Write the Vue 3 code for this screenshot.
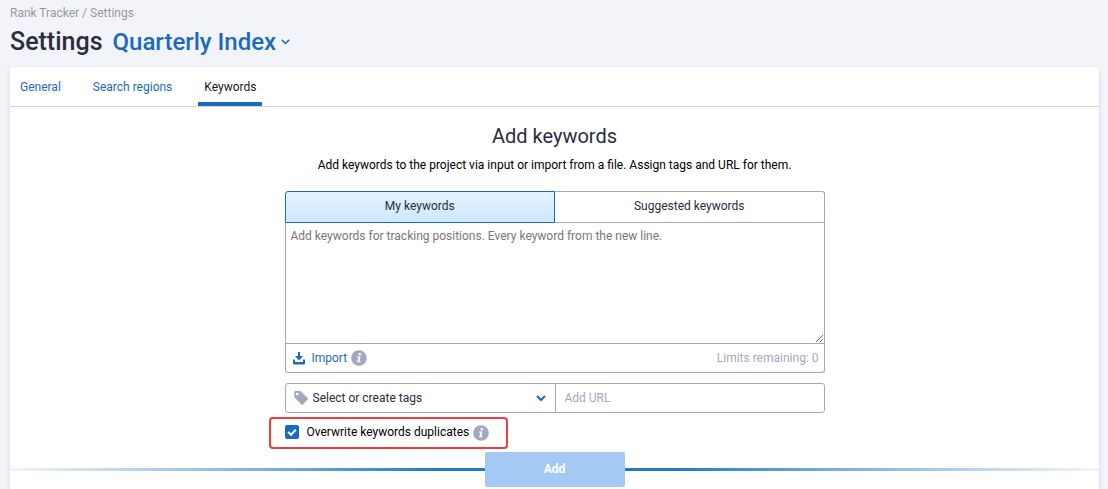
<script setup>
import { ref } from 'vue'

const sections = ['General', 'Search regions', 'Keywords']
const activeSection = ref('Keywords')
const sources = ['My keywords', 'Suggested keywords']
const activeSource = ref('My keywords')
const keywords = ref('')
const tag = ref('')
const url = ref('')
const overwrite = ref(true)
</script>

<template>
  <div class="page">
    <header class="header">
      <nav class="crumbs" aria-label="Breadcrumb">
        <a href="#">Rank Tracker</a> / <a href="#">Settings</a>
      </nav>
      <div class="heading">
        <h1>Settings</h1>
        <button type="button" class="project">
          Quarterly Index
          <svg width="9" height="6" viewBox="0 0 9 6" aria-hidden="true">
            <path d="M0.700 0.800l3.800 3.700L8.300 0.800" fill="none" stroke="currentColor" stroke-width="1.600" />
          </svg>
        </button>
      </div>
    </header>

    <main class="panel">
      <nav class="tabs" aria-label="Settings sections">
        <a
          v-for="section in sections"
          :key="section"
          href="#"
          :class="{ active: section === activeSection }"
          @click.prevent="activeSection = section"
        >{{ section }}</a>
      </nav>

      <form class="content" @submit.prevent>
        <h2>Add keywords</h2>
        <p class="lead">Add keywords to the project via input or import from a file. Assign tags and URL for them.</p>

        <div class="fields">
          <div class="sources">
            <button
              v-for="source in sources"
              :key="source"
              type="button"
              :class="{ active: source === activeSource }"
              @click="activeSource = source"
            >{{ source }}</button>
          </div>
          <textarea
            v-model="keywords"
            aria-label="Keywords"
            placeholder="Add keywords for tracking positions. Every keyword from the new line."
          ></textarea>
          <div class="tools">
            <button type="button" class="import">
              <svg width="12" height="13" viewBox="0 0 12 13" aria-hidden="true">
                <path d="M0 7.500h2v2.500h8V7.500h2v4a1 1 0 0 1-1 1H1a1 1 0 0 1-1-1z" fill="currentColor" />
                <path d="M5 0h2v4h3L6 8.500L2 4h3z" fill="currentColor" />
              </svg>
              Import
            </button>
            <svg class="info" width="16" height="16" viewBox="0 0 16 16" role="img" aria-label="Import help">
              <circle cx="8" cy="8" r="7.800" fill="#a2a8bf" />
              <circle cx="8.800" cy="4.200" r="1.300" fill="#fff" />
              <path d="M6 6.500h3.600l-1.200 4.700h1.200l-.3 1.100H5.700l.3-1.100h.5l.9-3.600H5.700z" fill="#fff" />
            </svg>
            <span class="limits">Limits remaining: 0</span>
          </div>

          <div class="extras">
            <div class="tag-field">
              <svg class="tag-icon" width="14" height="14" viewBox="0 0 14 14" aria-hidden="true">
                <path fill-rule="evenodd" d="M1 0h5.500L13.600 7a1 1 0 0 1 0 1.400L9 13.600a1 1 0 0 1-1.400 0L0.300 6.500V1Q.3 0 1 0zM3.200 1.700a1.300 1.300 0 1 0 0 2.600a1.300 1.300 0 1 0 0-2.600z" fill="#a2a8bf" />
              </svg>
              <select v-model="tag" aria-label="Tags">
                <option value="">Select or create tags</option>
              </select>
              <svg class="arrow" width="10" height="7" viewBox="0 0 10 7" aria-hidden="true">
                <path d="M1 1l4 4l4-4" fill="none" stroke="#1a6bbd" stroke-width="2" />
              </svg>
            </div>
            <input v-model="url" type="text" class="url" aria-label="URL" placeholder="Add URL" />
          </div>

          <div class="overwrite">
            <label>
              <input v-model="overwrite" type="checkbox" />
              <span>Overwrite keywords duplicates</span>
            </label>
            <svg class="info" width="16" height="16" viewBox="0 0 16 16" role="img" aria-label="Overwrite help">
              <circle cx="8" cy="8" r="7.800" fill="#a2a8bf" />
              <circle cx="8.800" cy="4.200" r="1.300" fill="#fff" />
              <path d="M6 6.500h3.600l-1.200 4.700h1.200l-.3 1.100H5.700l.3-1.100h.5l.9-3.600H5.700z" fill="#fff" />
            </svg>
          </div>
        </div>

        <div class="submit">
          <span class="line"></span>
          <button type="submit">Add</button>
          <span class="line right"></span>
        </div>
      </form>
    </main>
  </div>
</template>

<style>
body {
  background: #f3f4f9;
}
</style>

<style scoped>
.page,
.page *,
.page *::after {
  box-sizing: border-box;
}
.page {
  display: flex;
  flex-direction: column;
  min-height: 100vh;
  padding: 5px 9px 0 10px;
  font: 12px/16px Roboto, sans-serif;
  color: #2b2d3c;
}
button,
select,
input,
textarea {
  font: inherit;
  color: inherit;
  margin: 0;
}
button {
  cursor: pointer;
}
a {
  text-decoration: none;
}
.crumbs,
.crumbs a {
  color: #999;
}
.heading {
  display: flex;
  align-items: center;
  gap: 10px;
  height: 40px;
}
h1 {
  margin: 0;
  padding-top: 2px;
  font-size: 25px;
  line-height: 28px;
  font-weight: 500;
}
.project {
  display: flex;
  align-items: center;
  gap: 5px;
  padding: 2px 0 0;
  border: 0;
  background: none;
  font-size: 24px;
  line-height: 28px;
  font-weight: 500;
  color: #1a6bbd;
}
.header {
  padding-bottom: 6px;
}
.panel {
  flex: 1 0 auto;
  background: #fff;
  border-radius: 3px 3px 0 0;
  box-shadow: 0 2px 5px #cdd8ec;
}
.tabs {
  display: flex;
  gap: 20px;
  padding: 0 4px;
  border-bottom: 1px solid #c6d3e5;
}
.tabs a {
  padding: 12px 6px 7px;
  border-bottom: 4px solid transparent;
  color: #1a6bbd;
}
.tabs .active {
  border-color: #1a6bbd;
  color: #17181f;
}
h2 {
  margin: 0;
  padding-top: 17px;
  font-size: 20px;
  line-height: 24px;
  font-weight: 400;
  text-align: center;
}
.lead {
  margin: 9px 0 18px;
  text-align: center;
  color: #000;
}
.fields {
  width: 540px;
  max-width: 100%;
  margin: 0 auto;
}
.sources {
  display: flex;
}
.sources button {
  flex: 1;
  height: 32px;
  padding: 0 0 2px;
  border: 1px solid #a2a8bf;
  border-left: 0;
  border-radius: 0 3px 0 0;
  background: #fff;
}
.sources .active {
  border: 1px solid #1a6bbd;
  border-radius: 3px 0 0 0;
  background: linear-gradient(#e5f3ff, #cde8ff);
}
textarea {
  display: block;
  width: 100%;
  height: 121px;
  padding: 5px;
  border: 1px solid #a2a8bf;
  border-width: 0 1px 1px;
  outline: 0;
  resize: vertical;
}
textarea::placeholder {
  color: #777;
}
.tools {
  display: flex;
  align-items: center;
  gap: 4px;
  height: 29px;
  padding: 0 5px 0 7px;
  border: 1px solid #a2a8bf;
  border-top: 0;
  border-radius: 0 0 3px 3px;
}
.import {
  display: flex;
  align-items: center;
  gap: 7px;
  padding: 0;
  border: 0;
  background: none;
  color: #1a6bbd;
}
.limits {
  margin-left: auto;
  color: #a2a8bf;
}
.extras {
  display: grid;
  grid-template-columns: 1fr 1fr;
  height: 30px;
  margin-top: 10px;
  border: 1px solid #a2a8bf;
  border-radius: 3px;
}
.tag-field {
  position: relative;
}
.tag-icon {
  position: absolute;
  left: 8px;
  top: 7px;
  pointer-events: none;
}
.arrow {
  position: absolute;
  right: 9px;
  top: 11px;
  pointer-events: none;
}
select {
  width: 100%;
  height: 100%;
  padding: 0 24px 0 27px;
  border: 0;
  outline: 0;
  appearance: none;
  background: none;
}
.url {
  min-width: 0;
  padding: 0 9px;
  border: 0;
  border-left: 1px solid #a2a8bf;
  border-radius: 0 3px 3px 0;
  outline: 0;
}
.url::placeholder {
  color: #a2a8bf;
}
.overwrite {
  display: inline-flex;
  align-items: center;
  gap: 4px;
  height: 32px;
  margin: 4px 0 0 -16px;
  padding: 0 17px 0 14px;
  border: 2px solid #f03c3c;
  border-radius: 4px;
  vertical-align: top;
}
.overwrite label {
  display: flex;
  align-items: center;
  gap: 8px;
  padding-bottom: 2px;
  color: #000;
}
.overwrite input {
  display: grid;
  place-items: center;
  width: 14px;
  height: 14px;
  appearance: none;
  border: 1px solid #1a6bbd;
  border-radius: 2px;
}
.overwrite input:checked {
  background: #1a6bbd;
}
.overwrite input:checked::after {
  content: '';
  width: 8px;
  height: 5px;
  margin-bottom: 2px;
  border: solid #fff;
  border-width: 0 0 2px 2px;
  transform: rotate(-45deg);
}
.submit {
  display: flex;
  align-items: center;
  margin-top: 3px;
}
.line {
  flex: 1;
  height: 3px;
  background: linear-gradient(90deg, #f3f4f9, #6fa8d8 60%, #1f7ac3 90%);
}
.line.right {
  background: linear-gradient(270deg, #f3f4f9, #6fa8d8 60%, #1f7ac3 90%);
}
.submit button {
  width: 140px;
  height: 35px;
  padding: 0 0 2px;
  border: 0;
  border-radius: 2px;
  background: #a4c9f5;
  color: #fff;
  font-weight: 700;
}
</style>
